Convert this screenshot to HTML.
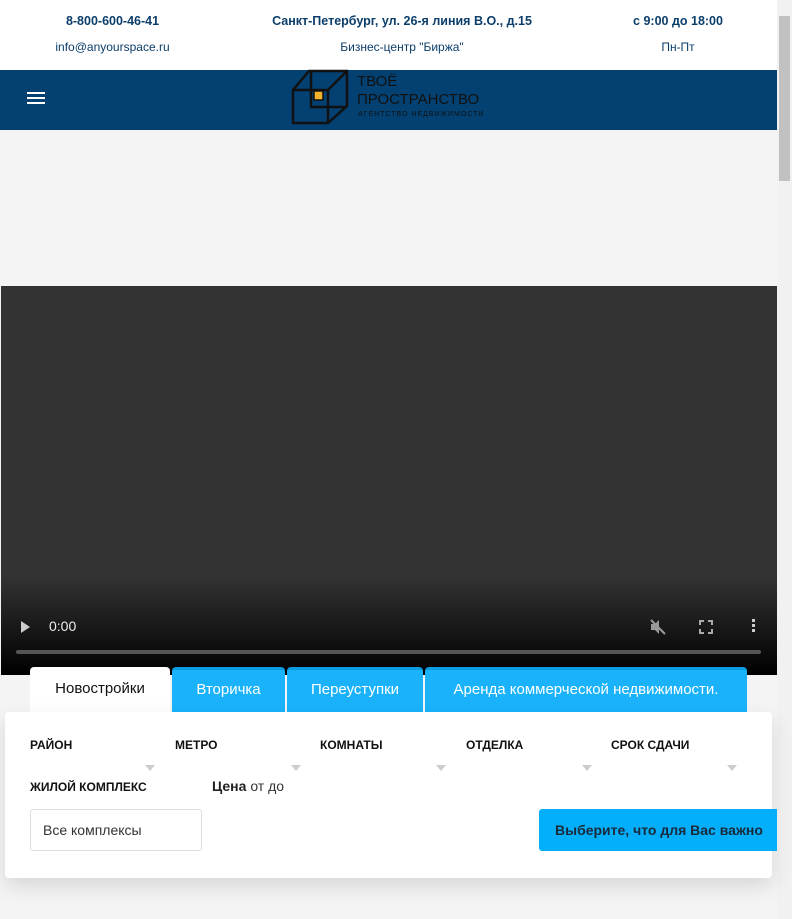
<!DOCTYPE html><html><head><meta charset="utf-8"><style>
*{margin:0;padding:0;box-sizing:border-box}
body{width:792px;height:919px;overflow:hidden;background:#f4f4f4;font-family:"Liberation Sans",sans-serif;position:relative}
.a{position:absolute}
.top{left:0;top:0;width:777px;height:70px;background:#fff;color:#0c3e6b}
.top .c{position:absolute;text-align:center;font-size:12.5px}
.b{font-weight:bold}
.nav{left:0;top:70px;width:777px;height:60px;background:#024172}
.sb{left:777px;top:0;width:15px;height:919px;background:#f1f1f1}
.video{left:1px;top:286px;width:776px;height:389px;background:linear-gradient(#333 0,#333 290px,#000 389px)}
.tab{top:667px;height:45px;background:#1ab3fb;color:#fff;font-size:15px;text-align:center;border-radius:4px 4px 0 0;border-top:3px solid #0a9ce0;line-height:40px}
.panel{left:5px;top:712px;width:767px;height:166px;background:#fff;border-radius:4px;box-shadow:0 8px 20px rgba(0,0,0,.12)}
.lbl{font-size:12px;font-weight:bold;color:#111;top:738px}
.arr{width:0;height:0;border-left:5px solid transparent;border-right:5px solid transparent;border-top:6px solid #ccc;top:765px}
</style></head><body>
<div class="a top">
<div class="c b" style="left:40px;width:145px;top:14px">8-800-600-46-41</div>
<div class="c" style="left:40px;width:145px;top:40px;font-size:12px">info@anyourspace.ru</div>
<div class="c b" style="left:262px;width:280px;top:14px">Санкт-Петербург, ул. 26-я линия В.О., д.15</div>
<div class="c" style="left:262px;width:280px;top:40px;font-size:12px">Бизнес-центр "Биржа"</div>
<div class="c b" style="left:618px;width:120px;top:14px">с 9:00 до 18:00</div>
<div class="c" style="left:618px;width:120px;top:40px;font-size:12px">Пн-Пт</div>
</div>
<div class="a nav">
<svg class="a" style="left:285px;top:-2px" width="70" height="60" viewBox="0 0 70 60"><g fill="none" stroke="#111" stroke-width="2.5" stroke-linejoin="miter"><path d="M24 3H62V38L43 55H8V22ZM8 22H43V55M43 22L62 3M26 3V39H62"/></g><rect x="29" y="23" width="9" height="9" fill="#f4b12a" stroke="#111" stroke-width="1.5"/></svg>
<div class="a" style="left:357px;top:3px;font-size:15px;line-height:18px;color:#111">ТВОЁ<br>ПРОСТРАНСТВО</div>
<div class="a" style="left:358px;top:41px;font-size:7px;color:#111;letter-spacing:1px">АГЕНТСТВО НЕДВИЖИМОСТИ</div>
<div class="a" style="left:27px;top:22px;width:18px;height:2px;background:#fff;box-shadow:0 5px 0 #fff,0 10px 0 #fff"></div>
</div>
<div class="a sb"><div class="a" style="left:2px;top:16px;width:11px;height:165px;background:#c1c1c1"></div></div>
<div class="a video">
<div class="a" style="left:20px;top:335px;border-left:9px solid #ccc;border-top:6px solid transparent;border-bottom:6px solid transparent"></div>
<div class="a" style="left:48px;top:332px;color:#eee;font-size:14px">0:00</div>
<svg class="a" style="left:648px;top:332px" width="18" height="18" viewBox="0 0 18 18"><path d="M2 6H6L10 2V16L6 12H2Z" fill="#999"/><path d="M2 2L16 16" stroke="#999" stroke-width="2"/></svg>
<svg class="a" style="left:698px;top:334px" width="14" height="14" viewBox="0 0 14 14" fill="none" stroke="#aaa" stroke-width="2"><path d="M1 5V1H5M9 1H13V5M13 9V13H9M5 13H1V9"/></svg>
<div class="a" style="left:751px;top:333px;width:3px;height:3px;background:#ccc;box-shadow:0 5px 0 #ccc,0 10px 0 #ccc"></div>
<div class="a" style="left:15px;top:364px;width:745px;height:4px;border-radius:2px;background:#555"></div>
</div>
<div class="a" style="left:30px;top:667px;width:140px;height:46px;background:#fff;border-radius:4px 4px 0 0;font-size:15px;text-align:center;line-height:44px;color:#111">Новостройки</div>
<div class="a tab" style="left:172px;width:113px">Вторичка</div>
<div class="a tab" style="left:287px;width:136px">Переуступки</div>
<div class="a tab" style="left:425px;width:322px">Аренда коммерческой недвижимости.</div>
<div class="a panel"></div>
<div class="a lbl" style="left:30px">РАЙОН</div>
<div class="a lbl" style="left:175px">МЕТРО</div>
<div class="a lbl" style="left:320px">КОМНАТЫ</div>
<div class="a lbl" style="left:466px">ОТДЕЛКА</div>
<div class="a lbl" style="left:611px">СРОК СДАЧИ</div>
<div class="a arr" style="left:145px"></div><div class="a arr" style="left:291px"></div><div class="a arr" style="left:436px"></div><div class="a arr" style="left:582px"></div><div class="a arr" style="left:727px"></div>
<div class="a lbl" style="left:30px;top:780px">ЖИЛОЙ КОМПЛЕКС</div>
<div class="a" style="left:212px;top:778px;font-size:14px;color:#333"><b style="color:#222">Цена</b> от до</div>
<div class="a" style="left:30px;top:809px;width:172px;height:42px;border:1px solid #ddd;border-radius:3px;font-size:14px;color:#333;padding:12px 12px">Все комплексы</div>
<div class="a" style="left:539px;top:809px;width:238px;height:42px;background:#03aefb;border-radius:3px 0 0 3px;font-size:14px;font-weight:bold;color:#1a2a3a;line-height:42px;padding-left:16px">Выберите, что для Вас важно</div>
</body></html>
